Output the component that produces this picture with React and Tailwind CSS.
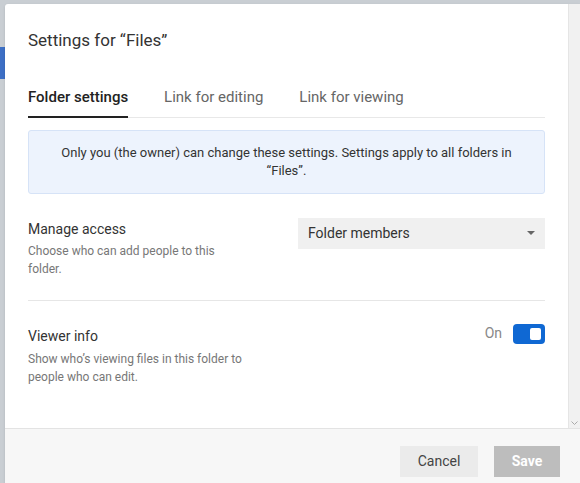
export default function App() {
  return (
    <div className="w-[580px] h-[483px] bg-[#c9ced3] flex flex-col overflow-hidden" style={{ fontFamily: 'Roboto, "Liberation Sans", sans-serif' }}>
      <div className="h-[4px] shrink-0" />
      <div className="flex flex-1 min-h-0">
        <div className="w-[5px] shrink-0 flex flex-col">
          <div className="h-[43px]" />
          <div className="h-[32px] bg-[#3d6fc5]" />
        </div>
        <div className="flex-1 bg-white rounded-tl-[3px] flex flex-col min-h-0 shadow">
          <div className="flex flex-1 min-h-0">
            <div className="flex-1 pl-[23px] pr-[23px]">
              <div className="pt-[26px] text-[17px] text-[#333] leading-[20px]">Settings for “Files”</div>
              <div className="mt-[36px] flex gap-[36px] border-b border-[#e8e8e8] text-[15px]">
                <div className="pb-[7px] border-b-2 border-[#222] -mb-px font-medium text-[#222]">Folder settings</div>
                <div className="text-[#666]">Link for editing</div>
                <div className="text-[#666]">Link for viewing</div>
              </div>
              <div className="mt-[12px] h-[64px] bg-[#edf3fd] border border-[#d6e3f7] rounded-[3px] flex items-center justify-center text-center text-[13px] text-[#333] leading-[18px] px-6">
                Only you (the owner) can change these settings. Settings apply to all folders in “Files”.
              </div>
              <div className="mt-[24px] flex justify-between pb-[22px] border-b border-[#e6e6e6]">
                <div>
                  <div className="text-[14px] text-[#333] mt-[1px]">Manage access</div>
                  <div className="text-[12px] text-[#777] leading-[18px] mt-[2px] w-[220px]">Choose who can add people to this folder.</div>
                </div>
                <div className="w-[247px] h-[31px] bg-[#f0f0f0] flex items-center justify-between px-[10px] text-[14px] text-[#333]">
                  Folder members
                  <svg width="8" height="4" viewBox="0 0 8 4"><path d="M0 0h8L4 4z" fill="#666" /></svg>
                </div>
              </div>
              <div className="mt-[25px] flex justify-between">
                <div>
                  <div className="text-[14px] text-[#333]">Viewer info</div>
                  <div className="text-[12px] text-[#777] leading-[18px] mt-[3px] w-[240px]">Show who’s viewing files in this folder to people who can edit.</div>
                </div>
                <div className="flex items-center gap-[11px] h-[20px] mt-[-2px]">
                  <span className="text-[14px] text-[#888]">On</span>
                  <div className="w-[32px] h-[20px] rounded-[4px] bg-[#0f68d3] flex items-center justify-end pr-[4px]">
                    <div className="w-[11px] h-[12px] rounded-[2px] bg-white" />
                  </div>
                </div>
              </div>
            </div>
            <div className="w-[12px] bg-[#f1f1f1] border-l border-[#e5e5e5] flex flex-col justify-end items-center pb-[2px]">
              <svg width="7" height="5" viewBox="0 0 7 5"><path d="M0.5 0.5L3.5 3.5L6.5 0.5" stroke="#aaa" fill="none" /></svg>
            </div>
          </div>
          <div className="h-[55px] shrink-0 bg-[#f7f7f7] border-t border-[#e3e3e3] flex items-center justify-end gap-[16px] pr-[20px] pt-[10px]">
            <div className="w-[78px] h-[31px] bg-[#ebebeb] flex items-center justify-center text-[14px] text-[#444]">Cancel</div>
            <div className="w-[66px] h-[31px] bg-[#bdbdbd] flex items-center justify-center text-[14px] font-bold text-white">Save</div>
          </div>
        </div>
      </div>
    </div>
  );
}
